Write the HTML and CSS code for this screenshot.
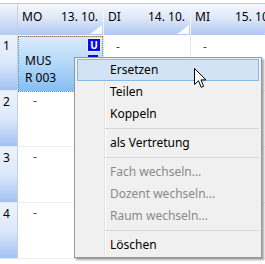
FILE: index.html
```html
<!DOCTYPE html>
<html>
<head>
<meta charset="utf-8">
<link rel="stylesheet" href="styles.css">
</head>
<body>
<div class="app">
  <div class="topstrip"></div>
  <div class="grid">
    <div class="corner"></div>
    <div class="hcell"><span>MO</span><span class="date">13. 10.</span><i class="tri"></i></div>
    <div class="hcell"><span>DI</span><span class="date">14. 10.</span><i class="tri"></i></div>
    <div class="hcell last"><span>MI</span><span class="date">15. 10.</span><i class="tri"></i></div>

    <div class="rlabel">1</div>
    <div class="cell sel">
      <div class="lesson">
        <div class="badges"><span class="ubadge">U</span><span class="ubar"></span></div>
        <div class="ltext">MUS<br>R 003</div>
      </div>
    </div>
    <div class="cell narrow"><span class="dash">-</span></div>
    <div class="cell narrow last"><span class="dash">-</span></div>

    <div class="rlabel">2</div>
    <div class="cell"><span class="dash">-</span></div>
    <div class="cell"></div>
    <div class="cell last"></div>

    <div class="rlabel">3</div>
    <div class="cell"><span class="dash">-</span></div>
    <div class="cell"></div>
    <div class="cell last"></div>

    <div class="rlabel">4</div>
    <div class="cell"><span class="dash">-</span></div>
    <div class="cell"></div>
    <div class="cell last"></div>
  </div>

  <div class="menu">
    <div class="item hover">Ersetzen</div>
    <div class="item">Teilen</div>
    <div class="item">Koppeln</div>
    <div class="sep"></div>
    <div class="item">als Vertretung</div>
    <div class="sep"></div>
    <div class="item dis">Fach wechseln...</div>
    <div class="item dis">Dozent wechseln...</div>
    <div class="item dis">Raum wechseln...</div>
    <div class="sep"></div>
    <div class="item">Löschen</div>
  </div>

  <svg class="cursor" width="13" height="21" viewBox="0 0 13 21">
    <path d="M0.5 0.5 L0.5 16.5 L4.5 12.7 L7.2 19.3 L9.6 18.3 L7 11.9 L12 11.9 Z" fill="#fff" stroke="#000" stroke-width="1" stroke-linejoin="miter"/>
  </svg>
</div>
</body>
</html>
```

FILE: styles.css
```css
* { box-sizing: border-box; }
html, body { margin: 0; padding: 0; background: #fff; }
body {
  font-family: "Noto Sans", "Segoe UI", sans-serif;
  font-size: 12px;
  color: #000;
  width: 265px;
  height: 264px;
  overflow: hidden;
}
.app { position: relative; width: 265px; height: 264px; overflow: hidden; }
.topstrip { height: 4px; border-bottom: 1px solid #c9c9c9; background: #fff; }

.grid {
  display: grid;
  grid-template-columns: 18px 86px 87px 87px;
  grid-template-rows: 31px 56px 56px 56px 56px;
}
.corner {
  background: linear-gradient(#f4f7fd, #b3cbf3);
  border-right: 1px solid #c4cfe0;
}
.hcell {
  position: relative;
  background: linear-gradient(#f4f7fd 0%, #dfe8f9 45%, #aec7f2 100%);
  border-right: 1px solid #f2f5fb;
  display: flex;
  justify-content: space-between;
  padding: 5px 4px 0 4px;
  line-height: 16px;
}
.hcell .date { padding-right: 1px; }
.tri {
  position: absolute;
  right: 1px;
  bottom: 1px;
  width: 0;
  height: 0;
  border-left: 12px solid transparent;
  border-bottom: 9px solid rgba(255,255,255,0.9);
}
.rlabel {
  background: linear-gradient(#eef3fc 0%, #dde8fa 50%, #a3c1f4 100%);
  border-right: 1px solid #c4cfe0;
  border-bottom: 1px solid #e4eaf4;
  padding: 3px 0 0 3px;
  line-height: 16px;
}
.cell {
  border-right: 1px solid #e6e6e6;
  border-bottom: 1px solid #ececec;
  background: #fff;
  padding: 2px 0 0 15px;
  line-height: 16px;
}
.cell.narrow { padding-left: 12px; padding-top: 4px; }
.cell.last { border-right: none; }
.dash { color: #444; }
.cell.sel { padding: 1px 0 0 0; border-bottom: none; }
.lesson {
  height: 56px;
  border: 1px dotted #e3750a;
  background: linear-gradient(#d7ebfd 0%, #b8daf9 45%, #86bdf2 100%);
  position: relative;
  padding: 15px 0 0 6px;
  line-height: 17px;
}
.badges {
  position: absolute;
  right: 2px;
  top: 2px;
  display: flex;
  flex-direction: column;
  align-items: flex-start;
  gap: 4px;
}
.ubadge {
  width: 12px;
  height: 12px;
  background: #0a0ae6;
  color: #fff;
  font-weight: bold;
  font-size: 10px;
  line-height: 12px;
  text-align: center;
  outline: 1px solid #eef;
}
.ubar { width: 10px; height: 4px; background: #0a0ae6; }

.menu {
  position: absolute;
  left: 74px;
  top: 57px;
  width: 188px;
  height: 201px;
  background: #f0f0f0;
  border: 1px solid #979797;
  box-shadow: 2px 2px 2px rgba(0,0,0,0.35);
  padding: 1px 2px;
  display: flex;
  flex-direction: column;
}
.menu::before {
  content: "";
  position: absolute;
  left: 29px;
  top: 1px;
  bottom: 1px;
  width: 1px;
  background: #e2e2e2;
  border-right: 1px solid #fff;
}
.item {
  position: relative;
  height: 22px;
  line-height: 20px;
  padding-left: 32px;
  border: 1px solid transparent;
  white-space: nowrap;
}
.item.hover {
  background: #d1e3f5;
  border-color: #86b8ea;
}
.item.dis { color: #8a8a8a; }
.sep {
  position: relative;
  height: 7px;
  margin-left: 28px;
}
.sep::after {
  content: "";
  position: absolute;
  left: 0;
  right: 0;
  top: 3px;
  height: 1px;
  background: #d7d7d7;
}
.cursor { position: absolute; left: 194px; top: 68px; }
```
